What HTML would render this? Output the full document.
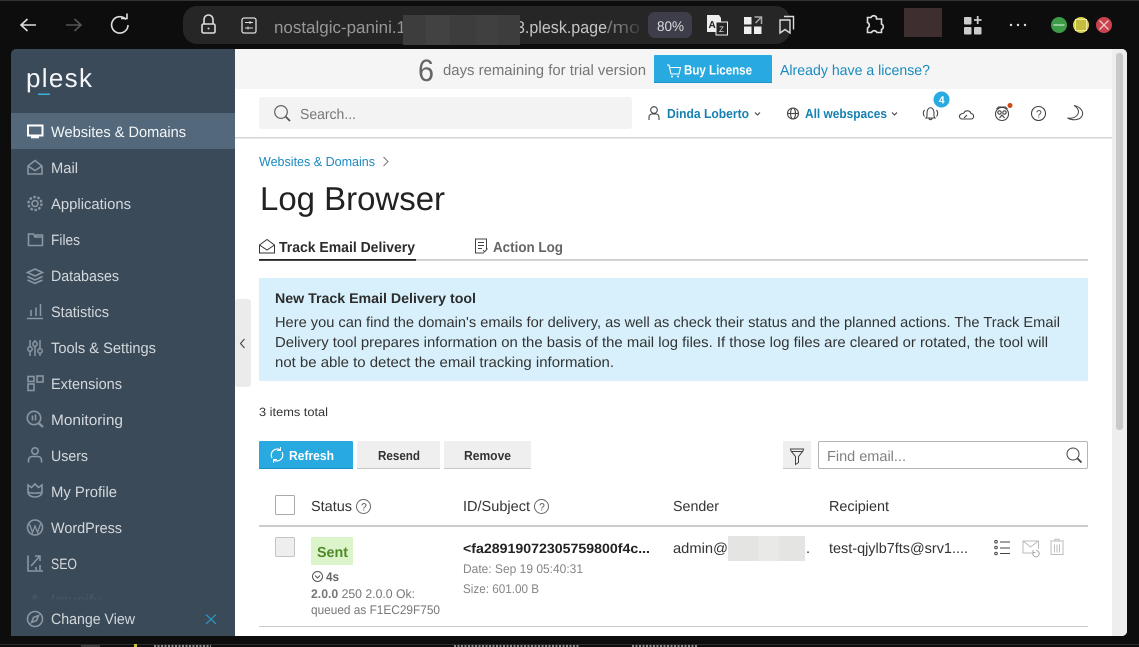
<!DOCTYPE html>
<html><head><meta charset="utf-8"><title>Log Browser</title>
<style>
html,body{margin:0;padding:0;background:#0d0d0d;width:1139px;height:647px;overflow:hidden}
svg{display:block}
text{font-family:"Liberation Sans",sans-serif}
.n{font-size:15px;fill:#d3d8dc}
.ic{fill:none;stroke:#8a96a2;stroke-width:1.6}
.d{fill:none;stroke:#444;stroke-width:1.1}
.w{fill:none;stroke:#ddd;stroke-width:1.6}
</style></head><body>
<svg width="1139" height="647" viewBox="0 0 1139 647" xmlns="http://www.w3.org/2000/svg" text-rendering="geometricPrecision">
<defs>
<linearGradient id="fade"><stop offset="0" stop-color="#262626" stop-opacity="0"/><stop offset="1" stop-color="#262626"/></linearGradient>
<linearGradient id="sfade" x1="0" y1="0" x2="0" y2="1"><stop offset="0" stop-color="#3b4a59" stop-opacity=".6"/><stop offset="1" stop-color="#3b4a59"/></linearGradient>
<clipPath id="pg"><rect x="11" y="49" width="1116" height="587" rx="5"/></clipPath>
</defs>
<rect width="1139" height="647" fill="#0d0d0d"/>
<rect width="1139" height="1" fill="#333"/>
<rect y="644" width="1139" height="1" fill="#2c2c2c"/>
<rect x="81" y="645" width="19" height="2" fill="#3a3a3a"/>
<rect x="134" y="644" width="3" height="3" fill="#c9c23a"/>
<path d="M154 646h57M454 646h125M632 646h66" stroke="#8a8a8a" stroke-width="2" stroke-dasharray="2 1.500"/>

<!-- browser toolbar -->
<path d="M36 25H21M27.5 19l-6.500 6 6.500 6" class="w"/>
<path d="M81 25H66M74.500 19l6.500 6-6.500 6" fill="none" stroke="#555" stroke-width="1.600"/>
<path d="M126 19.500a8.200 8.200 0 1 0 2 5.500" class="w"/><path d="M121 18.500h6v-5" class="w"/>
<rect x="183" y="6" width="607" height="38" rx="14" fill="#262626"/>
<path d="M204 24v-4.500a4.500 4.500 0 0 1 9 0V24" class="w"/><rect x="202" y="24" width="13" height="9" rx="1.500" class="w"/><circle cx="208.500" cy="28.500" r="1" fill="#ddd"/>
<rect x="242" y="18" width="14" height="15" rx="2" class="w" style="stroke-width:1.300"/><path d="M245 22.500h8M245 28h8M250 21v3M248 26.500v3" stroke="#ddd" fill="none"/>
<text x="274" y="33" font-size="17" fill="#979797" textLength="132" lengthAdjust="spacingAndGlyphs">nostalgic-panini.1</text>
<text x="516" y="33" font-size="17" fill="#c4c4c4" textLength="91" lengthAdjust="spacingAndGlyphs">3.plesk.page</text>
<rect x="403" y="15" width="117" height="30" fill="#3d3d3d"/><rect x="426" y="15" width="24" height="30" fill="#424242"/><rect x="476" y="15" width="22" height="30" fill="#404040"/>
<text x="607" y="33" font-size="17" fill="#7a7a7a" textLength="33" lengthAdjust="spacingAndGlyphs">/mo</text>
<rect x="620" y="14" width="25" height="24" fill="url(#fade)"/>
<rect x="648" y="12" width="44" height="26" rx="7" fill="#3e3e4a"/>
<text x="657" y="31" font-size="14" fill="#ddd" textLength="27" lengthAdjust="spacingAndGlyphs">80%</text>
<path d="M707 15h12l2 3v14h-14z" fill="#eee"/><rect x="716" y="22" width="11.500" height="13" fill="#262626" stroke="#eee"/>
<text x="708.500" y="28" font-size="10" font-weight="bold" fill="#222">A</text><text x="719" y="32" font-size="8" fill="#eee">Z</text>
<rect x="744" y="17" width="7.500" height="7.500" fill="#eee"/><rect x="744" y="26.500" width="7.500" height="7.500" fill="#eee"/><rect x="754" y="26.500" width="7.500" height="7.500" fill="#eee"/><path d="M754.500 17h7v7M761 17.500l-5.500 5.500" fill="none" stroke="#aaa" stroke-width="1.500"/>
<path d="M780 33V20h10v13l-5-3.500z" fill="none" stroke="#ddd" stroke-width="1.400"/><path d="M784 16.500h9.500v13" fill="none" stroke="#ddd" stroke-width="1.400"/>
<path d="M871 19.500a3 3 0 0 1 5.500 0l0 1.500h5v5a3 3 0 0 1 0 5.500v3h-4.500a3 3 0 0 0-5.500 0h-4v-4.500a3 3 0 0 0 0-5.500v-5z" class="w" transform="translate(0 -2)"/>
<rect x="904" y="8" width="38" height="29" fill="#3f2e2f"/>
<rect x="964" y="17" width="7.500" height="7.500" rx="1" fill="#ccc"/><rect x="964" y="27" width="7.500" height="7.500" rx="1" fill="#ccc"/><rect x="974" y="27" width="7.500" height="7.500" rx="1" fill="#ccc"/><path d="M977.700 16v8M974 20h7.500" stroke="#ccc" stroke-width="1.800"/>
<circle cx="1011" cy="25" r="1.200" fill="#ddd"/><circle cx="1018" cy="25" r="1.200" fill="#ddd"/><circle cx="1025" cy="25" r="1.200" fill="#ddd"/>
<circle cx="1059" cy="25" r="8" fill="#3d9c48"/><path d="M1053.500 25h11" stroke="#cfe8d0" stroke-width="1.200"/>
<circle cx="1081" cy="25" r="8" fill="#d8d24a"/><rect x="1075.500" y="19.500" width="11" height="11" fill="#c4bc3e" stroke="#efe9a0"/>
<circle cx="1104" cy="25" r="8" fill="#c9424d"/><path d="M1099.500 20.500l9 9M1108.500 20.500l-9 9" stroke="#f0c8cc" stroke-width="1.300"/>

<g clip-path="url(#pg)">
<rect x="235" y="49" width="892" height="587" fill="#fff"/>
<rect x="11" y="49" width="224" height="587" fill="#3b4a59"/>
<rect x="11" y="113" width="224" height="36" fill="#53687b"/>
<!-- banner -->
<rect x="235" y="49" width="877" height="40" fill="#f5f5f5"/>
<rect x="1112" y="49" width="15" height="587" fill="#eeeeee"/>
<rect x="1116" y="53" width="7" height="377" rx="3" fill="#c9c9c9"/>
</g>

<!-- logo -->
<text x="26" y="87" font-size="26" fill="#f4f6f8" textLength="66" lengthAdjust="spacing">plesk</text>
<rect x="38" y="93.500" width="12" height="1.500" fill="#35b3dc"/>

<!-- sidebar -->
<text x="51" y="137" class="n" style="fill:#f4f6f8" textLength="135" lengthAdjust="spacingAndGlyphs">Websites &amp; Domains</text>
<text x="51" y="173" class="n" textLength="27" lengthAdjust="spacingAndGlyphs">Mail</text>
<text x="51" y="209" class="n" textLength="80" lengthAdjust="spacingAndGlyphs">Applications</text>
<text x="51" y="245" class="n" textLength="29" lengthAdjust="spacingAndGlyphs">Files</text>
<text x="51" y="281" class="n" textLength="68" lengthAdjust="spacingAndGlyphs">Databases</text>
<text x="51" y="317" class="n" textLength="58" lengthAdjust="spacingAndGlyphs">Statistics</text>
<text x="51" y="353" class="n" textLength="105" lengthAdjust="spacingAndGlyphs">Tools &amp; Settings</text>
<text x="51" y="389" class="n" textLength="71" lengthAdjust="spacingAndGlyphs">Extensions</text>
<text x="51" y="425" class="n" textLength="72" lengthAdjust="spacingAndGlyphs">Monitoring</text>
<text x="51" y="461" class="n" textLength="37" lengthAdjust="spacingAndGlyphs">Users</text>
<text x="51" y="497" class="n" textLength="66" lengthAdjust="spacingAndGlyphs">My Profile</text>
<text x="51" y="533" class="n" textLength="71" lengthAdjust="spacingAndGlyphs">WordPress</text>
<text x="51" y="569" class="n" textLength="26" lengthAdjust="spacingAndGlyphs">SEO</text>
<text x="51" y="605" class="n" textLength="50" lengthAdjust="spacingAndGlyphs" opacity=".45">Imunify</text>
<path d="M35 593l1.500 3h3l-2.500 2.500 1 3.500-3-2-3 2 1-3.500-2.500-2.500h3z" fill="#8a96a2" opacity=".5"/>
<rect x="11" y="592" width="224" height="10" fill="url(#sfade)"/>
<rect x="11" y="602" width="224" height="34" fill="#3b4a59"/>
<text x="51" y="624" class="n" textLength="84" lengthAdjust="spacingAndGlyphs">Change View</text>
<path d="M206 614.500l10 9.500M216 614.500l-10 9.500" stroke="#2a9fc9" stroke-width="1.200"/>

<!-- sidebar icons -->
<rect x="28" y="125.500" width="14.500" height="10" fill="none" stroke="#fff" stroke-width="2"/><rect x="31" y="136.500" width="8" height="1.800" fill="#fff"/>
<path d="M28 166l7-5.500 7 5.500v8H28zM28 166l7 4.500 7-4.500" class="ic"/>
<circle cx="35" cy="203.500" r="3" class="ic"/><circle cx="35" cy="203.500" r="6.500" stroke-dasharray="2.500 1.600" fill="none" stroke="#8a96a2" stroke-width="2.400"/>
<path d="M28.500 234v11.500h14V237H35l-1.500-3z" class="ic"/><path d="M36 237v-2h6.500v2" class="ic"/>
<path d="M35 269l7.500 3.500-7.500 3.500-7.500-3.500zM27.500 276.500l7.500 3.500 7.500-3.500M27.500 280l7.500 3.500 7.500-3.500" class="ic"/>
<path d="M27 318.500h16M31 316v-6M36 316v-8.500M40.500 316v-12" class="ic"/>
<path d="M30 340v16M35 340v16M40 340v16" class="ic" style="stroke-width:1.500"/><circle cx="30" cy="349" r="2.200" fill="#3b4a59" stroke="#8a96a2" stroke-width="1.500"/><circle cx="35" cy="344" r="2.200" fill="#3b4a59" stroke="#8a96a2" stroke-width="1.500"/><circle cx="40" cy="351" r="2.200" fill="#3b4a59" stroke="#8a96a2" stroke-width="1.500"/>
<rect x="28" y="384" width="6" height="6.500" class="ic"/><rect x="28" y="376.500" width="6" height="5" class="ic"/><rect x="37" y="376" width="6" height="6" class="ic"/>
<circle cx="34" cy="418" r="6.700" class="ic"/><path d="M39 423.500l4 3.500" class="ic" style="stroke-width:2.400"/><path d="M32.500 415.500v5M35.500 414.500v6" class="ic"/>
<circle cx="35" cy="451" r="3.200" class="ic"/><path d="M28.500 462.500v-2.500a3.500 3.500 0 0 1 3.500-3.500h6a3.500 3.500 0 0 1 3.500 3.500v2.500" class="ic"/>
<path d="M28 492v-7l3.500 2.500L35 484l3.500 3.500L42 485v7M28 492c0 3 3 5 7 5s7-2 7-5M28 492c2 1.500 12 1.500 14 0" class="ic"/>
<circle cx="35" cy="527.500" r="7.500" class="ic"/><path d="M29.500 524l3 8.500 2.500-6.500 2.500 6.500 3-8.500" class="ic" style="stroke-width:1.300"/>
<path d="M28 555.500v15.500h15M31 566l8-9M35 556h5v5M36 570v-3M40 570v-5" class="ic"/>
<circle cx="35" cy="619" r="7.500" class="ic"/><path d="M31.500 622.500l2-5 5-2-2 5z" class="ic"/>

<!-- collapse handle -->
<rect x="235" y="299" width="16" height="88" rx="3" fill="#ebebeb"/>
<path d="M244.500 339l-4 4.500 4 4.500" fill="none" stroke="#444" stroke-width="1.100"/>

<!-- banner content -->
<text x="418" y="81" font-size="31" fill="#666" textLength="16" lengthAdjust="spacingAndGlyphs">6</text>
<text x="443" y="75" font-size="15" fill="#767676" textLength="203" lengthAdjust="spacingAndGlyphs">days remaining for trial version</text>
<rect x="654" y="55" width="118" height="28" rx="1" fill="#28a9df"/><rect x="654" y="82" width="118" height="1" fill="#1c94c8"/>
<path d="M667 65h2l2 9h8l1.500-6.500H670" fill="none" stroke="#fff" stroke-width="1.100"/><circle cx="672" cy="76.500" r="1" fill="#fff"/><circle cx="678" cy="76.500" r="1" fill="#fff"/>
<text x="684" y="74.500" font-size="13.500" font-weight="bold" fill="#fff" textLength="68" lengthAdjust="spacingAndGlyphs">Buy License</text>
<text x="780" y="75" font-size="14.500" fill="#1a8ac0" textLength="150" lengthAdjust="spacingAndGlyphs">Already have a license?</text>

<!-- search header -->
<rect x="259" y="97" width="373" height="32" rx="3" fill="#f3f3f3"/>
<circle cx="281" cy="112" r="6.300" fill="none" stroke="#555" stroke-width="1.100"/><path d="M285.500 116.500l4.500 4.500" stroke="#555" stroke-width="1.800"/>
<text x="300" y="119" font-size="14.500" fill="#777" textLength="56" lengthAdjust="spacingAndGlyphs">Search...</text>
<circle cx="654" cy="110" r="3.300" class="d"/><path d="M649 120v-3a3 3 0 0 1 3-3h4a3 3 0 0 1 3 3v3" class="d"/>
<text x="667" y="118" font-size="13" font-weight="bold" fill="#1780b3" textLength="82" lengthAdjust="spacingAndGlyphs">Dinda Loberto</text>
<path d="M755 112.500l2.500 2.500 2.500-2.500" class="d"/>
<circle cx="793" cy="113.500" r="5.500" class="d"/><ellipse cx="793" cy="113.500" rx="2.500" ry="5.500" class="d"/><path d="M787.500 113.500h11" class="d"/>
<text x="805" y="118" font-size="13" font-weight="bold" fill="#1780b3" textLength="82" lengthAdjust="spacingAndGlyphs">All webspaces</text>
<path d="M892 112.500l2.500 2.500 2.500-2.500" class="d"/>
<path d="M926 118c1.500-1.500 1-3 1-5 0-7 7-7 7 0 0 2-.5 3.500 1 5zM929 118c0 2.200 3 2.200 3 0M924.500 110c-1.500 2-1.500 4.500 0 6.500M936.500 110c1.500 2 1.500 4.500 0 6.500" class="d"/>
<circle cx="941.500" cy="99.500" r="8" fill="#29abe2"/><text x="938.700" y="103.500" font-size="10.500" font-weight="bold" fill="#fff">4</text>
<path d="M962 119h9c3.500 0 3.500-5 0-5.500-1-3.500-6-3.500-7-.5-3 .5-5 2-4.500 4 .3 1 1 2 2.500 2zM964 118l3-3" class="d"/>
<circle cx="1002" cy="114" r="6.500" class="d"/><circle cx="999.500" cy="112.500" r="1.700" class="d"/><circle cx="1004.500" cy="112.500" r="1.700" class="d"/><path d="M996.500 109l2-2h7l2 2M999.500 118l2.500-3 2.500 3" class="d"/>
<circle cx="1010" cy="105.500" r="2.500" fill="#cf4a14"/>
<circle cx="1038.500" cy="113.500" r="7" class="d"/><text x="1036" y="117.500" font-size="10.500" fill="#444">?</text>
<path d="M1074 105.500C1081 107 1084 112 1082 116 1080 120 1073 121 1067.500 118 1074 119 1078 116 1078.500 112 1078.500 109 1076.500 107 1074 105.500z" fill="none" stroke="#444" stroke-width="1"/>
<rect x="235" y="137" width="877" height="1.500" fill="#d5d5d5"/>

<!-- title -->
<text x="259" y="166" font-size="13" fill="#1a8ac0" textLength="116" lengthAdjust="spacingAndGlyphs">Websites &amp; Domains</text>
<path d="M383.500 157l4.500 4.500-4.500 4.500" fill="none" stroke="#777" stroke-width="1"/>
<text x="260" y="210" font-size="33" fill="#222" textLength="185" lengthAdjust="spacingAndGlyphs">Log Browser</text>

<!-- tabs -->
<path d="M259.500 245l7.500-5.500 7.500 5.500v8h-15zM259.500 245l7.500 5 7.500-5" fill="none" stroke="#333" stroke-width="1"/>
<text x="279" y="252" font-size="14.500" font-weight="bold" fill="#2b2b2b" textLength="136" lengthAdjust="spacingAndGlyphs">Track Email Delivery</text>
<path d="M484 253h-8.500v-14h11v10M478 242.500h6M478 245.500h6M478 248.500h4M483 250l1.500 2 3-3.500" fill="none" stroke="#444" stroke-width="1"/>
<text x="493" y="252" font-size="14.500" fill="#555" font-weight="bold" textLength="70" lengthAdjust="spacingAndGlyphs" opacity=".9">Action Log</text>
<rect x="259" y="259" width="829" height="1.800" fill="#ccc"/>
<rect x="259" y="259" width="157" height="1.800" fill="#222"/>

<!-- info box -->
<rect x="259" y="278" width="829" height="103" fill="#d7f0fb"/>
<text x="275" y="303" font-size="14" font-weight="bold" fill="#2c2c2c" textLength="201" lengthAdjust="spacingAndGlyphs">New Track Email Delivery tool</text>
<text x="275" y="327" font-size="14.500" fill="#333" textLength="785" lengthAdjust="spacingAndGlyphs">Here you can find the domain's emails for delivery, as well as check their status and the planned actions. The Track Email</text>
<text x="275" y="347" font-size="14.500" fill="#333" textLength="773" lengthAdjust="spacingAndGlyphs">Delivery tool prepares information on the basis of the mail log files. If those log files are cleared or rotated, the tool will</text>
<text x="275" y="367" font-size="14.500" fill="#333" textLength="339" lengthAdjust="spacingAndGlyphs">not be able to detect the email tracking information.</text>

<text x="259" y="416" font-size="12" fill="#333" textLength="69" lengthAdjust="spacingAndGlyphs">3 items total</text>

<!-- toolbar -->
<rect x="259" y="441" width="94" height="28" rx="1" fill="#28a9df"/><rect x="259" y="468" width="94" height="1" fill="#1b8fc2"/>
<path d="M272 458a6 6 0 0 1 8.500-8M282 452a6 6 0 0 1-8.500 8" fill="none" stroke="#fff" stroke-width="1.200"/><path d="M280.500 447v3.500H277M273.500 463v-3.500H277" fill="none" stroke="#fff"/>
<text x="289" y="460" font-size="13" font-weight="bold" fill="#fff" textLength="45" lengthAdjust="spacingAndGlyphs">Refresh</text>
<rect x="357" y="441" width="83" height="28" rx="1" fill="#efefef"/><rect x="357" y="468" width="83" height="1" fill="#c6c6c6"/>
<text x="378" y="460" font-size="13" font-weight="bold" fill="#333" textLength="42" lengthAdjust="spacingAndGlyphs">Resend</text>
<rect x="444" y="441" width="87" height="28" rx="1" fill="#efefef"/><rect x="444" y="468" width="87" height="1" fill="#c6c6c6"/>
<text x="464" y="460" font-size="13" font-weight="bold" fill="#333" textLength="47" lengthAdjust="spacingAndGlyphs">Remove</text>
<rect x="783" y="441" width="28" height="28" rx="1" fill="#efefef"/><rect x="783" y="468" width="28" height="1" fill="#c6c6c6"/>
<path d="M790.500 449h13l-.5 2-4.500 5.500v6l-3 2v-8l-4.500-5.500zM791 451.500h12" fill="none" stroke="#444" stroke-width="1"/>
<rect x="818.500" y="441.500" width="269" height="27" rx="1.500" fill="#fff" stroke="#b5b5b5"/>
<text x="827" y="461" font-size="14.500" fill="#808080" textLength="79" lengthAdjust="spacingAndGlyphs">Find email...</text>
<circle cx="1073" cy="454" r="6" fill="none" stroke="#444" stroke-width="1"/><path d="M1077.500 458.500l4 4" stroke="#444" stroke-width="1.800"/>

<!-- table header -->
<rect x="275.500" y="495.500" width="19" height="19" rx="1" fill="#fff" stroke="#aaa"/>
<text x="311" y="511" font-size="14.500" fill="#333" textLength="41" lengthAdjust="spacingAndGlyphs">Status</text>
<circle cx="363.500" cy="506.500" r="7" fill="none" stroke="#666" stroke-width="1"/><text x="361" y="510.500" font-size="10.500" fill="#555">?</text>
<text x="463" y="511" font-size="14.500" fill="#333" textLength="67" lengthAdjust="spacingAndGlyphs">ID/Subject</text>
<circle cx="541.500" cy="506.500" r="7" fill="none" stroke="#666" stroke-width="1"/><text x="539" y="510.500" font-size="10.500" fill="#555">?</text>
<text x="673" y="511" font-size="14.500" fill="#333" textLength="46" lengthAdjust="spacingAndGlyphs">Sender</text>
<text x="829" y="511" font-size="14.500" fill="#333" textLength="60" lengthAdjust="spacingAndGlyphs">Recipient</text>
<rect x="259" y="525" width="829" height="2" fill="#ccc"/>

<!-- row -->
<rect x="275.500" y="537.500" width="19" height="19" rx="1" fill="#eeeeee" stroke="#c4c4c4"/>
<rect x="311" y="537" width="42" height="28" rx="1" fill="#dcf4ca"/>
<text x="317" y="557" font-size="14.500" font-weight="bold" fill="#4f8a26" textLength="31" lengthAdjust="spacingAndGlyphs">Sent</text>
<circle cx="317.500" cy="576.500" r="5" fill="none" stroke="#555" stroke-width="1"/><path d="M315 575.500l2.500 2.500 2.500-2.500" fill="none" stroke="#555" stroke-width="1"/>
<text x="326" y="581" font-size="12.500" font-weight="bold" fill="#666" textLength="13" lengthAdjust="spacingAndGlyphs">4s</text>
<text x="311" y="598" font-size="12.500" fill="#777" textLength="104" lengthAdjust="spacingAndGlyphs"><tspan font-weight="bold">2.0.0</tspan> 250 2.0.0 Ok:</text>
<text x="311" y="614" font-size="12.500" fill="#777" textLength="129" lengthAdjust="spacingAndGlyphs">queued as F1EC29F750</text>
<text x="463" y="553" font-size="13.500" font-weight="bold" fill="#222" textLength="187" lengthAdjust="spacingAndGlyphs">&lt;fa28919072305759800f4c...</text>
<text x="463" y="573" font-size="12.500" fill="#858585" textLength="120" lengthAdjust="spacingAndGlyphs">Date: Sep 19 05:40:31</text>
<text x="463" y="593" font-size="12.500" fill="#858585" textLength="76" lengthAdjust="spacingAndGlyphs">Size: 601.00 B</text>
<text x="673" y="553" font-size="14.500" fill="#333" textLength="55" lengthAdjust="spacingAndGlyphs">admin@</text>
<rect x="728" y="536" width="77" height="25" fill="#e4e4e2"/><rect x="758" y="536" width="21" height="25" fill="#e9e9e7"/>
<text x="806" y="553" font-size="14.500" fill="#333">.</text>
<text x="829" y="553" font-size="14.500" fill="#333" textLength="139" lengthAdjust="spacingAndGlyphs">test-qjylb7fts@srv1....</text>
<path d="M1000 542h10M1000 548h10M1000 553.500h10" stroke="#444" stroke-width="1.100" fill="none"/><circle cx="996" cy="541.700" r="1.300" fill="none" stroke="#444"/><circle cx="996" cy="547.500" r="1.300" fill="none" stroke="#444"/><circle cx="996" cy="553.500" r="1.300" fill="none" stroke="#444"/>
<path d="M1033 553h-10v-12h15.500v8M1023 541l7.500 6 8-6" fill="none" stroke="#bbb" stroke-width="1"/><path d="M1036 550.500a3.200 3.200 0 1 1-2.500 1.200M1033 550v2.500h2.500" fill="none" stroke="#aaa" stroke-width="1"/>
<path d="M1051 542v12.500h12V542M1050 541h14M1055 541v-1.800h4v1.800M1054.500 544.500v8M1057 544.500v8M1059.500 544.500v8" fill="none" stroke="#bbb" stroke-width="1"/>
<rect x="259" y="626" width="829" height="1" fill="#ccc"/>
</svg>
</body></html>
